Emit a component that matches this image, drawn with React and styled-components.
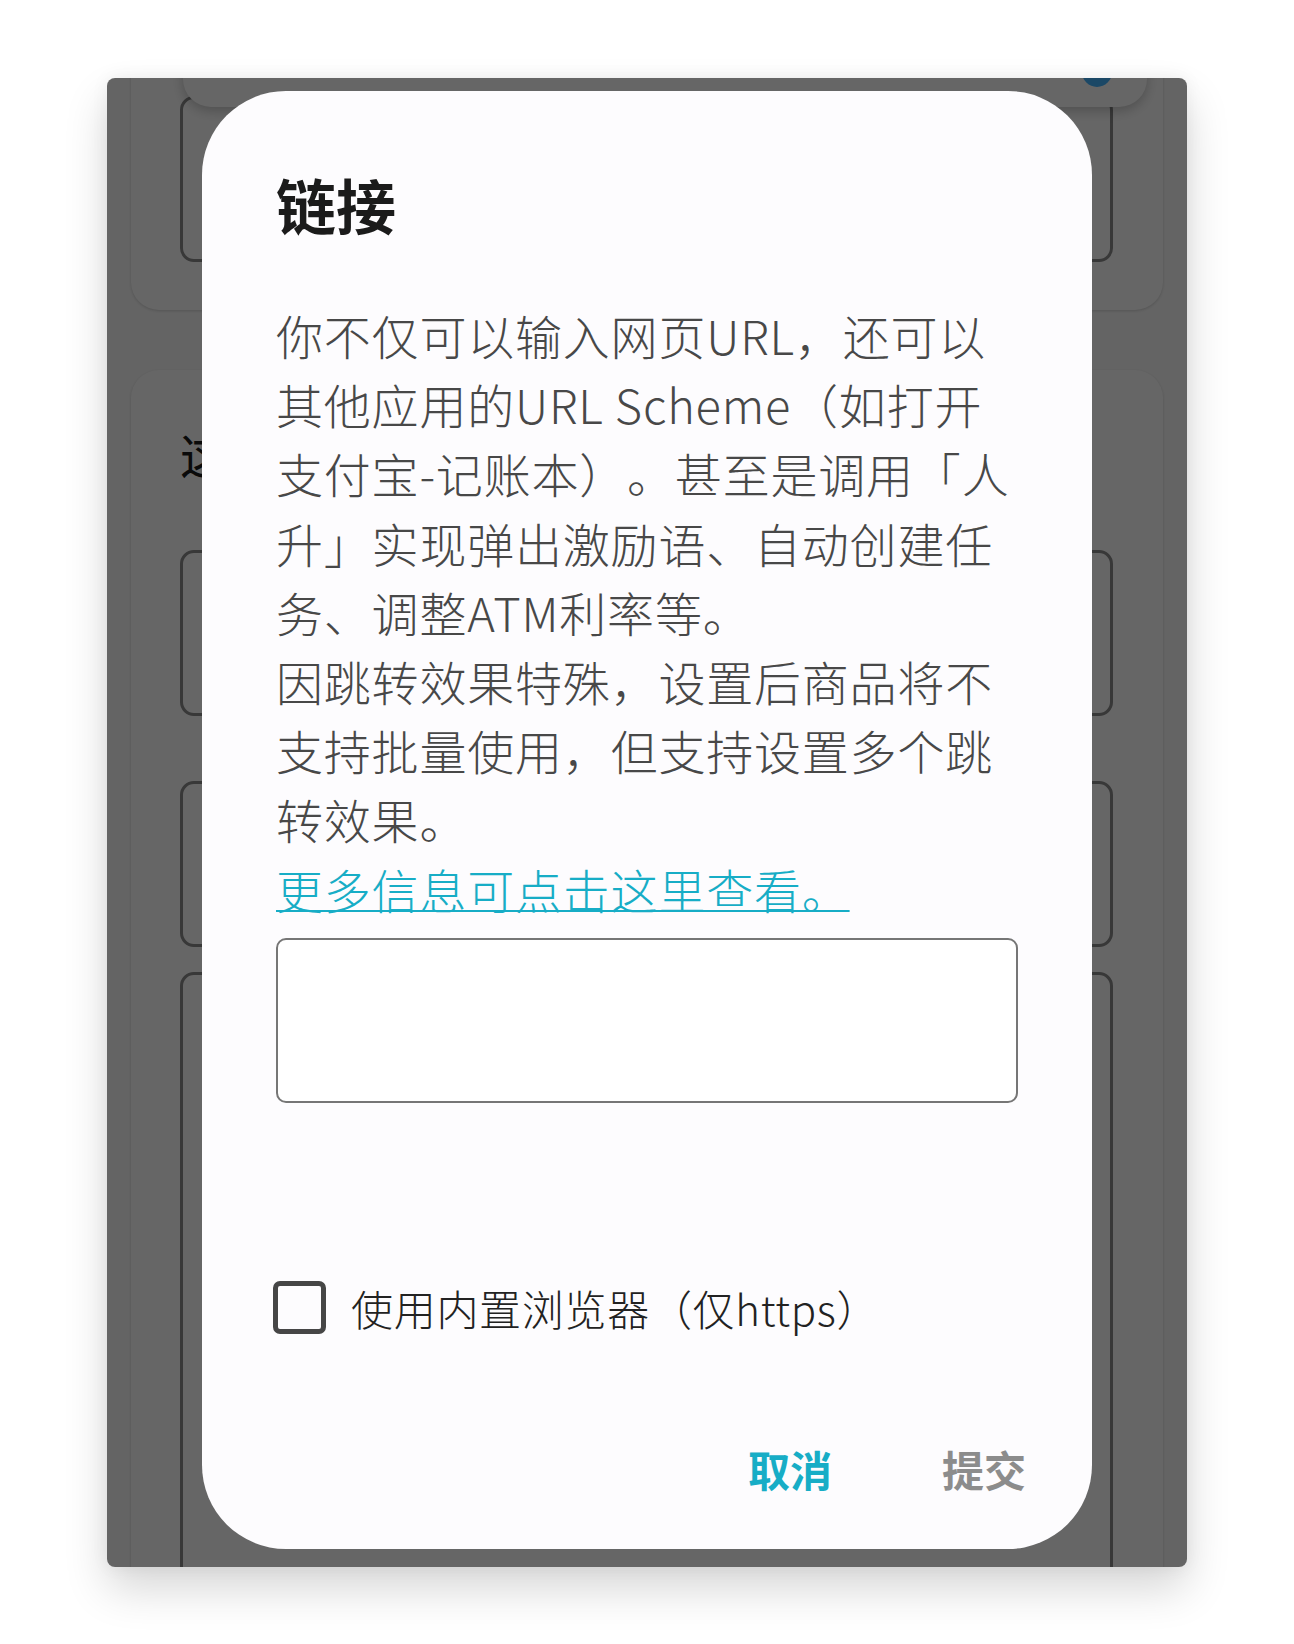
import React from "react";
import styled, { createGlobalStyle } from "styled-components";

const GlobalStyle = createGlobalStyle`
  html, body {
    margin: 0;
    padding: 0;
    background: #ffffff;
  }
  body {
    font-family: "Noto Sans CJK SC", "Noto Sans", sans-serif;
  }
`;

const Page = styled.div`
  width: 1294px;
  height: 1644px;
  padding: 78px 0 0 107px;
  box-sizing: border-box;
`;

const Screen = styled.div`
  position: relative;
  width: 1080px;
  height: 1489px;
  border-radius: 8px;
  overflow: hidden;
  background: #fafafa;
  box-shadow: 0 22px 44px rgba(0, 0, 0, 0.16), 0 0 18px rgba(0, 0, 0, 0.06);
`;

const Content = styled.div`
  display: flex;
  flex-direction: column;
  gap: 60px;
  padding: 0 24px;
`;

const Card = styled.div`
  display: flex;
  flex-direction: column;
  background: #ffffff;
  border-radius: 28px;
  box-shadow: 0 1px 3px rgba(0, 0, 0, 0.16);
  margin-top: ${({ offset }) => offset || "0"};
  padding: ${({ pad }) => pad};
`;

const CardTitle = styled.div`
  font-size: 48px;
  line-height: 64px;
  color: #1a1a1a;
`;

const Field = styled.div`
  height: ${({ tall }) => (tall ? "700px" : "166px")};
  margin-top: ${({ space }) => space || "0"};
  border: 3px solid #8c8c8c;
  border-radius: 14px;
  box-sizing: border-box;
`;

const Popup = styled.div`
  position: absolute;
  top: -40px;
  left: 76px;
  right: 40px;
  height: 69px;
  display: flex;
  justify-content: flex-end;
  align-items: flex-start;
  padding: 19px 35px 0 0;
  box-sizing: border-box;
  background: #ffffff;
  border-radius: 28px;
  box-shadow: 0 4px 12px rgba(0, 0, 0, 0.22);
`;

const Dot = styled.span`
  width: 30px;
  height: 30px;
  border-radius: 50%;
  background: #44b4ff;
`;

const Scrim = styled.div`
  position: absolute;
  inset: 0;
  display: flex;
  justify-content: center;
  align-items: flex-start;
  padding-top: 13px;
  background: rgba(0, 0, 0, 0.6);
`;

const Dialog = styled.div`
  width: 890px;
  height: 1458px;
  box-sizing: border-box;
  padding: 74px 74px 47px;
  display: flex;
  flex-direction: column;
  background: #fdfcfe;
  border-radius: 84px;
`;

const Title = styled.h2`
  margin: 0;
  font-size: 60px;
  line-height: 78px;
  font-weight: 700;
  color: #1b1b1b;
`;

const Body = styled.div`
  margin-top: 57px;
  font-size: 47px;
  font-weight: 300;
  line-height: 69.2px;
  letter-spacing: 0.8px;
  color: #484848;
  white-space: nowrap;
  text-spacing-trim: space-all;
`;

const Link = styled.a`
  display: block;
  color: #17adc6;
  text-decoration: underline;
  text-decoration-thickness: 2px;
`;

const Input = styled.textarea`
  display: block;
  margin-top: 15px;
  width: 100%;
  height: 165px;
  box-sizing: border-box;
  border: 2px solid #767676;
  border-radius: 10px;
  background: #ffffff;
  resize: none;
  outline: none;
`;

const CheckRow = styled.label`
  display: flex;
  align-items: center;
  gap: 25px;
  height: 53px;
  margin: 178px 0 0 -3px;
`;

const Box = styled.span`
  width: 53px;
  height: 53px;
  box-sizing: border-box;
  border: 5px solid #464646;
  border-radius: 7px;
`;

const CheckText = styled.span`
  font-size: 42px;
  font-weight: 300;
  letter-spacing: 0.7px;
  color: #222222;
  text-spacing-trim: space-all;
`;

const Actions = styled.div`
  display: flex;
  justify-content: flex-end;
  gap: 110px;
  margin: 105px -8px 0 0;
`;

const ActionButton = styled.button`
  padding: 0;
  border: none;
  background: none;
  font-family: inherit;
  font-size: 42px;
  line-height: 59px;
  font-weight: 700;
  color: ${({ primary }) => (primary ? "#17adc6" : "#8c8c8c")};
`;

export default function App() {
  return (
    <Page>
      <GlobalStyle />
      <Screen>
        <Content>
          <Card offset="-30px" pad="48px 50px 48px 49px">
            <Field />
          </Card>
          <Card pad="51px 50px 0 49px">
            <CardTitle>这里</CardTitle>
            <Field space="65px" />
            <Field space="65px" />
            <Field space="25px" tall />
          </Card>
        </Content>
        <Popup>
          <Dot />
        </Popup>
        <Scrim>
          <Dialog>
            <Title>链接</Title>
            <Body>
              你不仅可以输入网页URL，还可以
              <br />
              其他应用的URL Scheme（如打开
              <br />
              支付宝-记账本）。甚至是调用「人
              <br />
              升」实现弹出激励语、自动创建任
              <br />
              务、调整ATM利率等。
              <br />
              因跳转效果特殊，设置后商品将不
              <br />
              支持批量使用，但支持设置多个跳
              <br />
              转效果。
              <Link href="#">更多信息可点击这里查看。</Link>
            </Body>
            <Input />
            <CheckRow>
              <Box />
              <CheckText>使用内置浏览器（仅https）</CheckText>
            </CheckRow>
            <Actions>
              <ActionButton primary>取消</ActionButton>
              <ActionButton>提交</ActionButton>
            </Actions>
          </Dialog>
        </Scrim>
      </Screen>
    </Page>
  );
}
